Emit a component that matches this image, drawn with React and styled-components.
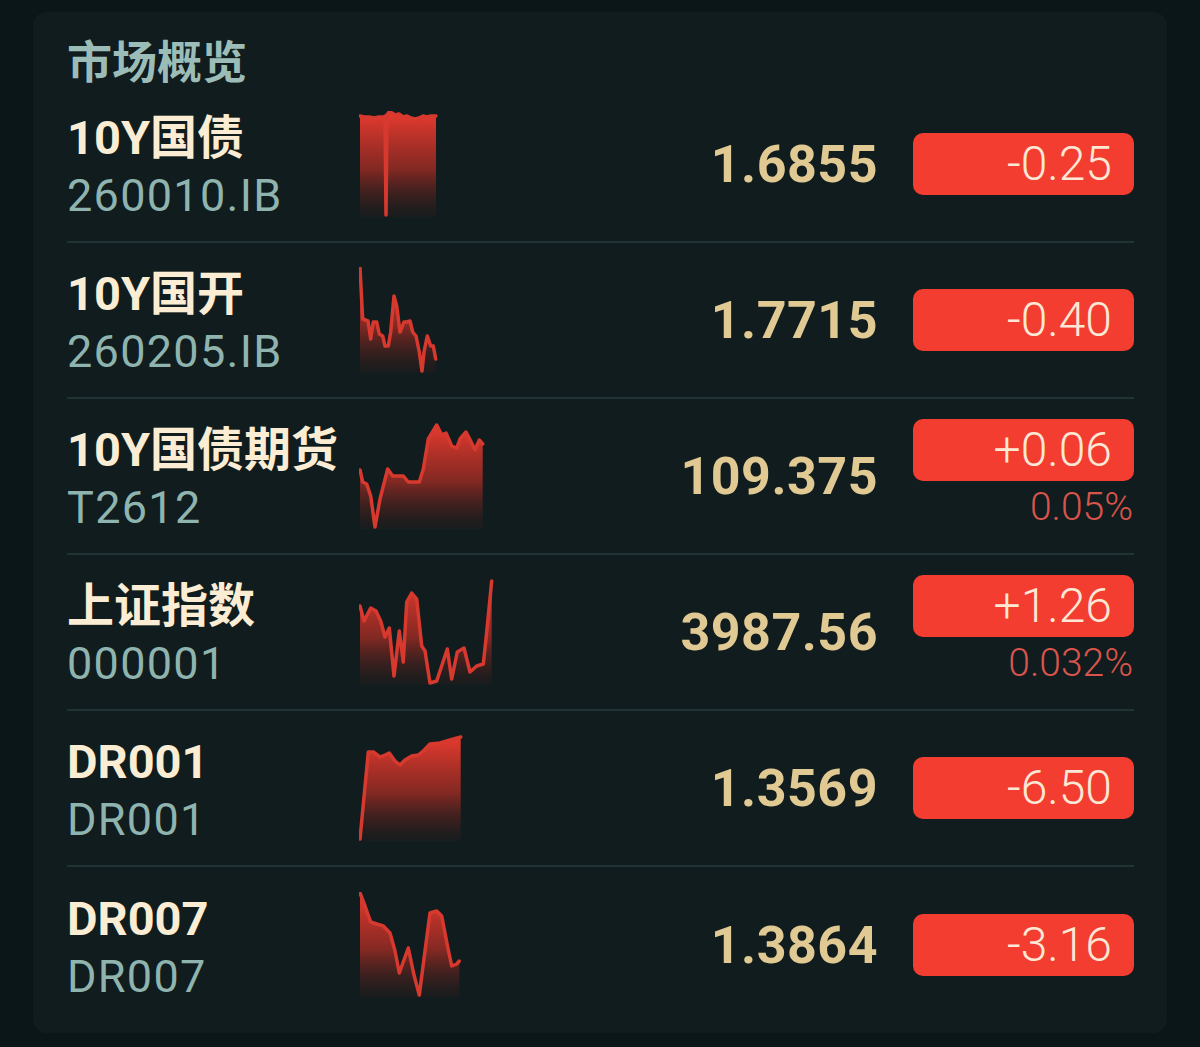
import React from "react";
import styled, { createGlobalStyle } from "styled-components";

const GlobalStyle = createGlobalStyle`
  body {
    margin: 0;
    background: #0b1618;
    font-family: Roboto, "Noto Sans CJK SC", sans-serif;
  }
`;

const Page = styled.div`
  padding: 12px 33px 12px 33px;
  min-height: 1047px;
  box-sizing: border-box;
`;

const Card = styled.div`
  background: #101c1e;
  border-radius: 14px;
  padding: 20px 33px 10px 34px;
`;

const Title = styled.h2`
  margin: 0;
  height: 55px;
  line-height: 56px;
  font-size: 45px;
  font-weight: 700;
  color: #9bbcb7;
  font-family: "Noto Sans CJK SC", sans-serif;
`;

const Row = styled.div`
  display: grid;
  grid-template-columns: 292px 140px 1fr 221px;
  align-items: center;
  height: 156px;
  box-sizing: border-box;
  border-bottom: 2px solid #1e3335;
  &:last-child {
    border-bottom: none;
  }
`;

const NameCol = styled.div`
  display: flex;
  flex-direction: column;
  padding-top: 5px;
`;

const Name = styled.div`
  font-size: 47px;
  line-height: 58px;
  font-weight: 700;
  color: #fbecd4;
  white-space: nowrap;
`;

const Code = styled.div`
  font-size: 45px;
  line-height: 58px;
  font-weight: 400;
  letter-spacing: 1.3px;
  color: #8fb4af;
`;

const ChartBox = styled.div`
  display: flex;
  align-items: center;
  height: 106px;
`;

const Price = styled.div`
  text-align: right;
  padding-right: 35px;
  font-size: 52px;
  font-weight: 700;
  color: #e0c992;
  letter-spacing: 0.5px;
`;

const ChangeCol = styled.div`
  display: flex;
  flex-direction: column;
  align-items: flex-end;
`;

const Badge = styled.div`
  width: 221px;
  height: 62px;
  box-sizing: border-box;
  border-radius: 10px;
  background: #f23d30;
  color: #fde8d5;
  font-size: 48px;
  font-weight: 300;
  line-height: 62px;
  text-align: right;
  padding-right: 22px;
`;

const Pct = styled.div`
  font-size: 39px;
  font-weight: 300;
  line-height: 52px;
  padding-right: 1px;
  color: #d9544a;
`;

const H = 106;

function Spark({ id, points }) {
  const line = points.map(([x, y]) => `${x},${y}`).join(" ");
  const first = points[0];
  const last = points[points.length - 1];
  const area = `M${first[0]},${H} L${line.replace(/ /g, " L")} L${last[0]},${H} Z`;
  return (
    <svg width="140" height={H} viewBox={`0 0 140 ${H}`}>
      <defs>
        <linearGradient id={id} x1="0" y1="0" x2="0" y2={H} gradientUnits="userSpaceOnUse">
          <stop offset="0" stopColor="#ea3b2f" stopOpacity="1" />
          <stop offset="0.55" stopColor="#a42c24" stopOpacity="0.78" />
          <stop offset="1" stopColor="#3a1d1a" stopOpacity="0.2" />
        </linearGradient>
      </defs>
      <path d={area} fill={`url(#${id})`} />
      <polyline
        points={line}
        fill="none"
        stroke="#d8392e"
        strokeWidth="3.5"
        strokeLinejoin="round"
        strokeLinecap="round"
      />
    </svg>
  );
}

const rows = [
  {
    name: "10Y国债",
    code: "260010.IB",
    price: "1.6855",
    change: "-0.25",
    chart: [
      [1, 5], [5, 6], [10, 6], [15, 7], [20, 6], [25, 6], [26, 5], [27, 104], [28, 4],
      [30, 1], [33, 2], [36, 4], [40, 3], [44, 6], [48, 5], [52, 7], [56, 8],
      [60, 7], [64, 5], [68, 6], [72, 5], [77, 5],
    ],
  },
  {
    name: "10Y国开",
    code: "260205.IB",
    price: "1.7715",
    change: "-0.40",
    chart: [
      [1, 1], [3.7, 52], [9, 54], [11.7, 72], [14.3, 55], [17.7, 55], [20.3, 67],
      [23.7, 69], [26, 79], [29.3, 79], [31.7, 65], [35, 29], [37.7, 39], [41, 65],
      [45, 55], [47.7, 55], [51, 54], [53.7, 65], [57, 69], [60.3, 85], [63, 104],
      [65, 85], [68.3, 69], [71.7, 79], [74.3, 79], [76.7, 92],
    ],
  },
  {
    name: "10Y国债期货",
    code: "T2612",
    price: "109.375",
    change: "+0.06",
    pct: "0.05%",
    chart: [
      [1, 47], [3.7, 59], [7.7, 61], [11.7, 73], [16, 104], [21, 76], [28.7, 46],
      [33.7, 53], [44.3, 53], [49.3, 59], [60.3, 59], [64.3, 46], [69.3, 16],
      [77.7, 2], [82.7, 12], [87, 10], [92.7, 23], [97.7, 25], [101, 16],
      [107, 9], [111.7, 18], [116, 27], [120.3, 17], [123.7, 21],
    ],
  },
  {
    name: "上证指数",
    code: "000001",
    price: "3987.56",
    change: "+1.26",
    pct: "0.032%",
    chart: [
      [1, 27], [5, 42], [11.7, 29], [17, 32], [21.7, 42], [26, 58], [30.3, 49],
      [35, 97], [40.3, 52], [44.3, 83], [47.7, 23], [52.7, 14], [57.7, 20],
      [62.7, 67], [66, 72], [71, 104], [77.7, 102], [88.3, 70], [92.7, 100],
      [98.3, 73], [105, 69], [111, 93], [117.7, 87], [124.3, 85], [127.7, 53],
      [132.7, 2],
    ],
  },
  {
    name: "DR001",
    code: "DR001",
    price: "1.3569",
    change: "-6.50",
    chart: [
      [1, 104], [9.3, 17], [14.3, 17], [21, 22], [26, 20], [30.3, 18], [36, 26],
      [41, 30], [46, 25], [52.7, 21], [59.3, 20], [64.3, 16], [71, 9], [81, 8],
      [91, 5], [101.7, 2],
    ],
  },
  {
    name: "DR007",
    code: "DR007",
    price: "1.3864",
    change: "-3.16",
    chart: [
      [1, 1], [6, 14], [11.7, 30], [17.7, 32], [24.3, 34], [31, 41], [36, 59],
      [40.3, 81], [49.3, 56], [55, 83], [60.3, 103], [66, 59], [71, 21],
      [77.7, 19], [82.7, 24], [88.3, 53], [92.7, 74], [97.7, 72], [100.3, 69],
    ],
  },
];

export default function App() {
  return (
    <>
      <GlobalStyle />
      <Page>
        <Card>
          <Title>市场概览</Title>
          {rows.map((r, i) => (
            <Row key={r.name}>
              <NameCol>
                <Name>{r.name}</Name>
                <Code>{r.code}</Code>
              </NameCol>
              <ChartBox>
                <Spark id={`spark-${i}`} points={r.chart} />
              </ChartBox>
              <Price>{r.price}</Price>
              <ChangeCol>
                <Badge>{r.change}</Badge>
                {r.pct && <Pct>{r.pct}</Pct>}
              </ChangeCol>
            </Row>
          ))}
        </Card>
      </Page>
    </>
  );
}
